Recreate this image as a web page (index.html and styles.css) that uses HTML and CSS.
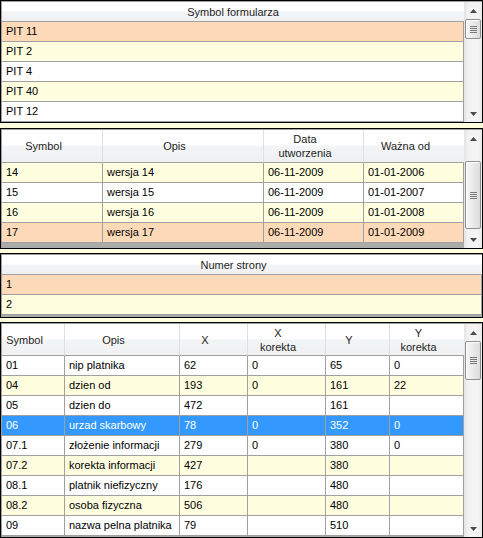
FILE: index.html
```html
<!DOCTYPE html>
<html>
<head>
<meta charset="utf-8">
<link rel="stylesheet" href="styles.css">
</head>
<body>
<div class="panel p1">
  <div class="inner">
    <div class="table">
      <div class="row hdr t1"><div class="h plain">Symbol formularza</div></div>
      <div class="row t1 peach"><div class="c">PIT 11</div></div>
      <div class="row t1 yel"><div class="c">PIT 2</div></div>
      <div class="row t1"><div class="c">PIT 4</div></div>
      <div class="row t1 yel"><div class="c">PIT 40</div></div>
      <div class="row t1"><div class="c">PIT 12</div></div>
    </div>
    <div class="vscroll">
      <div class="arrow"><svg width="7" height="4" viewBox="0 0 7 4"><path d="M3.5 0L7 4H0Z" fill="#4a4a4a"/></svg></div>
      <div class="track"><div class="thumb th1"><svg width="7" height="7" viewBox="0 0 7 7"><path d="M0 0.5H7M0 2.5H7M0 4.5H7M0 6.5H7" stroke="#7a7a7a" stroke-width="1"/></svg></div></div>
      <div class="arrow"><svg width="7" height="4" viewBox="0 0 7 4"><path d="M0 0H7L3.5 4Z" fill="#4a4a4a"/></svg></div>
    </div>
  </div>
</div>

<div class="panel p2">
  <div class="inner">
    <div class="table">
      <div class="row hdr tall t2">
        <div class="h">Symbol</div>
        <div class="h">Opis</div>
        <div class="h">Data<br>utworzenia</div>
        <div class="h">Ważna od</div>
      </div>
      <div class="row t2 yel"><div class="c">14</div><div class="c">wersja 14</div><div class="c">06-11-2009</div><div class="c">01-01-2006</div></div>
      <div class="row t2"><div class="c">15</div><div class="c">wersja 15</div><div class="c">06-11-2009</div><div class="c">01-01-2007</div></div>
      <div class="row t2 yel"><div class="c">16</div><div class="c">wersja 16</div><div class="c">06-11-2009</div><div class="c">01-01-2008</div></div>
      <div class="row t2 peach"><div class="c">17</div><div class="c">wersja 17</div><div class="c">06-11-2009</div><div class="c">01-01-2009</div></div>
    </div>
    <div class="vscroll">
      <div class="arrow"><svg width="7" height="4" viewBox="0 0 7 4"><path d="M3.5 0L7 4H0Z" fill="#4a4a4a"/></svg></div>
      <div class="track"><div class="thumb th2"><svg width="7" height="7" viewBox="0 0 7 7"><path d="M0 0.5H7M0 2.5H7M0 4.5H7M0 6.5H7" stroke="#7a7a7a" stroke-width="1"/></svg></div></div>
      <div class="arrow"><svg width="7" height="4" viewBox="0 0 7 4"><path d="M0 0H7L3.5 4Z" fill="#4a4a4a"/></svg></div>
    </div>
  </div>
</div>

<div class="panel p3">
  <div class="inner">
    <div class="table">
      <div class="row hdr t3"><div class="h">Numer strony</div></div>
      <div class="row t3 peach"><div class="c">1</div></div>
      <div class="row t3 yel"><div class="c">2</div></div>
    </div>
  </div>
</div>

<div class="panel p4">
  <div class="inner">
    <div class="table">
      <div class="row hdr tall4 t4">
        <div class="h">Symbol</div>
        <div class="h">Opis</div>
        <div class="h">X</div>
        <div class="h">X<br>korekta</div>
        <div class="h">Y</div>
        <div class="h">Y<br>korekta</div>
      </div>
      <div class="row t4"><div class="c">01</div><div class="c">nip platnika</div><div class="c">62</div><div class="c">0</div><div class="c">65</div><div class="c">0</div></div>
      <div class="row t4 yel"><div class="c">04</div><div class="c">dzien od</div><div class="c">193</div><div class="c">0</div><div class="c">161</div><div class="c">22</div></div>
      <div class="row t4"><div class="c">05</div><div class="c">dzien do</div><div class="c">472</div><div class="c"></div><div class="c">161</div><div class="c"></div></div>
      <div class="row t4 blue"><div class="c">06</div><div class="c">urzad skarbowy</div><div class="c">78</div><div class="c">0</div><div class="c">352</div><div class="c">0</div></div>
      <div class="row t4"><div class="c">07.1</div><div class="c">złożenie informacji</div><div class="c">279</div><div class="c">0</div><div class="c">380</div><div class="c">0</div></div>
      <div class="row t4 yel"><div class="c">07.2</div><div class="c">korekta informacji</div><div class="c">427</div><div class="c"></div><div class="c">380</div><div class="c"></div></div>
      <div class="row t4"><div class="c">08.1</div><div class="c">platnik niefizyczny</div><div class="c">176</div><div class="c"></div><div class="c">480</div><div class="c"></div></div>
      <div class="row t4 yel"><div class="c">08.2</div><div class="c">osoba fizyczna</div><div class="c">506</div><div class="c"></div><div class="c">480</div><div class="c"></div></div>
      <div class="row t4"><div class="c">09</div><div class="c">nazwa pelna platnika</div><div class="c">79</div><div class="c"></div><div class="c">510</div><div class="c"></div></div>
    </div>
    <div class="vscroll">
      <div class="arrow"><svg width="7" height="4" viewBox="0 0 7 4"><path d="M3.5 0L7 4H0Z" fill="#4a4a4a"/></svg></div>
      <div class="track"><div class="thumb th4"><svg width="7" height="7" viewBox="0 0 7 7"><path d="M0 0.5H7M0 2.5H7M0 4.5H7M0 6.5H7" stroke="#7a7a7a" stroke-width="1"/></svg></div></div>
      <div class="arrow"><svg width="7" height="4" viewBox="0 0 7 4"><path d="M0 0H7L3.5 4Z" fill="#4a4a4a"/></svg></div>
    </div>
  </div>
</div>
</body>
</html>
```

FILE: styles.css
```css
* { box-sizing: border-box; }
html, body { margin: 0; padding: 0; }
body {
  width: 483px;
  height: 538px;
  background: #ffffe0;
  font-family: "Liberation Sans", Arial, sans-serif;
  font-size: 11px;
  color: #000;
  display: flex;
  flex-direction: column;
  overflow: hidden;
}
.panel {
  border: 1px solid #000;
  flex: none;
  display: flex;
}
.p1 { height: 123px; }
.p2 { height: 121px; margin-top: 5px; }
.p3 { height: 65px; margin-top: 4px; }
.p4 { height: 216px; margin-top: 4px; }

.inner {
  flex: 1;
  display: flex;
  border-top: 1px solid #a0a0a0;
  border-left: 1px solid #a0a0a0;
  min-width: 0;
}
.table {
  width: 462px;
  flex: none;
  background: #ababab;
  display: flex;
  flex-direction: column;
}
.p1 .table { background: #fff; }
.p3 .table { width: 480px; }

.row { display: grid; flex: none; background: #fff; }
.t1 { grid-template-columns: 462px; }
.t2 { grid-template-columns: 101px 161px 100px 100px; }
.t3 { grid-template-columns: 480px; }
.t4 { grid-template-columns: 63px 115px 68px 78px 64px 74px; }

.yel { background: #ffffe0; }
.peach { background: #ffdab9; }
.blue { background: #3399ff; color: #fff; }

.c {
  height: 20px;
  line-height: 19px;
  padding-left: 4px;
  border-right: 1px solid #a0a0a0;
  border-bottom: 1px solid #a0a0a0;
  white-space: nowrap;
  overflow: hidden;
}

.hdr {
  background: linear-gradient(#ffffff 0%, #ffffff 45%, #f3f4f6 50%, #eef0f2 100%);
}
.h {
  height: 20px;
  border-bottom: 1px solid #a0a0a0;
  border-right: 1px solid #dedfe1;
  display: flex;
  align-items: center;
  justify-content: center;
  text-align: center;
  padding-right: 17px;
  line-height: 14px;
  color: #1e1e1e;
}
.h:last-child { border-right: none; }
.h.plain { padding-right: 0; }
.tall .h { height: 33px; }
.tall4 .h { height: 32px; }

.vscroll {
  width: 18px;
  flex: none;
  display: flex;
  flex-direction: column;
  background: linear-gradient(to right, #e4e4e4, #f2f2f2 25%, #f4f4f4 75%, #eaeaea);
}
.arrow {
  height: 17px;
  flex: none;
  display: flex;
  align-items: center;
  justify-content: center;
}
.arrow svg { display: block; }
.track { flex: 1; padding: 0 1px; }
.thumb {
  border: 1px solid #8f8f8f;
  border-radius: 2px;
  background: linear-gradient(to right, #f6f6f6, #eaeaea 50%, #dcdcdc);
  box-shadow: inset 1px 1px 0 #fff;
  display: flex;
  align-items: center;
  justify-content: center;
}
.thumb svg { display: block; }
.th1 { height: 20px; margin-top: 0; }
.th2 { height: 68px; margin-top: 14px; }
.th4 { height: 39px; margin-top: 0; }
```
